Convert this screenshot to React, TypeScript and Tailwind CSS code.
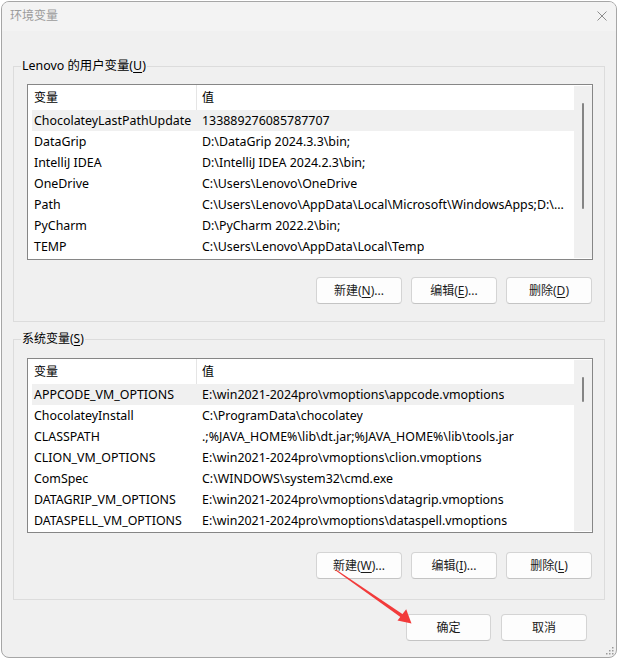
import React from "react";

type Row = [string, string];

const userRows: Row[] = [
  ["ChocolateyLastPathUpdate", "133889276085787707"],
  ["DataGrip", "D:\\DataGrip 2024.3.3\\bin;"],
  ["IntelliJ IDEA", "D:\\IntelliJ IDEA 2024.2.3\\bin;"],
  ["OneDrive", "C:\\Users\\Lenovo\\OneDrive"],
  ["Path", "C:\\Users\\Lenovo\\AppData\\Local\\Microsoft\\WindowsApps;D:\\..."],
  ["PyCharm", "D:\\PyCharm 2022.2\\bin;"],
  ["TEMP", "C:\\Users\\Lenovo\\AppData\\Local\\Temp"],
];

const sysRows: Row[] = [
  ["APPCODE_VM_OPTIONS", "E:\\win2021-2024pro\\vmoptions\\appcode.vmoptions"],
  ["ChocolateyInstall", "C:\\ProgramData\\chocolatey"],
  ["CLASSPATH", ".;%JAVA_HOME%\\lib\\dt.jar;%JAVA_HOME%\\lib\\tools.jar"],
  ["CLION_VM_OPTIONS", "E:\\win2021-2024pro\\vmoptions\\clion.vmoptions"],
  ["ComSpec", "C:\\WINDOWS\\system32\\cmd.exe"],
  ["DATAGRIP_VM_OPTIONS", "E:\\win2021-2024pro\\vmoptions\\datagrip.vmoptions"],
  ["DATASPELL_VM_OPTIONS", "E:\\win2021-2024pro\\vmoptions\\dataspell.vmoptions"],
];

function U({ children }: { children: React.ReactNode }) {
  return <span className="underline underline-offset-[2px]">{children}</span>;
}

function Btn({ children, w = "w-[86px]" }: { children: React.ReactNode; w?: string }) {
  return (
    <div
      className={`${w} h-[27px] shrink-0 flex items-center justify-center rounded-[4px] border border-[#d4d4d4] border-b-[#c4c4c4] bg-[#fdfdfd] text-[12px] text-[#1b1b1b]`}
    >
      {children}
    </div>
  );
}

function ListView({
  rows,
  h,
  thumbH,
}: {
  rows: Row[];
  h: string;
  thumbH: string;
}) {
  return (
    <div className={`flex border border-[#868686] bg-white ${h}`}>
      <div className="flex-1 min-w-0 flex flex-col pl-[4px] overflow-hidden">
        <div className="flex h-[25px] shrink-0 items-stretch">
          <div className="w-[164px] shrink-0 pl-[2px] flex items-center">变量</div>
          <div className="w-[1px] shrink-0 bg-[#e5e5e5]" />
          <div className="pl-[5px] flex items-center">值</div>
        </div>
        {rows.map(([k, v], i) => (
          <div
            key={k}
            className={`flex h-[21px] shrink-0 items-center pt-[1px] text-[12.4px] ${i === 0 ? "bg-[#f0f0f0]" : ""}`}
          >
            <div className="w-[170px] shrink-0 pl-[2px] whitespace-nowrap overflow-hidden">{k}</div>
            <div className="min-w-0 whitespace-nowrap overflow-hidden">{v}</div>
          </div>
        ))}
      </div>
      <div className="w-[18px] shrink-0 my-[1px] bg-[#f0f0f0] pt-[17px] pl-[8px]">
        <div className={`w-[2px] ${thumbH} rounded-full bg-[#858585]`} />
      </div>
    </div>
  );
}

export default function App() {
  return (
    <div className="relative w-[618px] h-[659px] bg-white p-[1px] font-['Noto_Sans','Noto_Sans_CJK_SC',sans-serif] text-[12px] text-black">
      <div className="relative w-[616px] h-[657px] border border-[#a6a6a6] rounded-[8px] overflow-hidden flex flex-col bg-[#f0f0f0]">
        {/* title bar */}
        <div className="h-[29px] shrink-0 bg-[#f3f3f3] flex items-center justify-between pl-[8px] pr-[9px] pb-[2px]">
          <span className="text-[12px] text-[#9b9b9b]">环境变量</span>
          <svg width="10" height="10" viewBox="0 0 10 10" className="block">
            <path d="M0.5 0.5 L9.5 9.5 M9.5 0.5 L0.5 9.5" stroke="#8c8c8c" strokeWidth="1" fill="none" />
          </svg>
        </div>

        {/* body */}
        <div className="flex-1 flex flex-col px-[11px] pt-[27px]">
          <fieldset className="border border-[#dcdcdc] flex flex-col">
            <legend className="ml-[7px] px-[1px] leading-[16px] text-[12.4px]">
              Lenovo 的用户变量(<U>U</U>)
            </legend>
            <div className="mt-[10px] ml-[13px] mr-[11px]">
              <ListView rows={userRows} h="h-[176px]" thumbH="h-[106px]" />
            </div>
            <div className="mt-[17px] mb-[17px] mr-[12px] flex justify-end gap-[9px]">
              <Btn>
                新建(<U>N</U>)...
              </Btn>
              <Btn>
                编辑(<U>E</U>)...
              </Btn>
              <Btn>
                删除(<U>D</U>)
              </Btn>
            </div>
          </fieldset>

          <fieldset className="mt-[9px] border border-[#dcdcdc] flex flex-col">
            <legend className="ml-[7px] px-[1px] leading-[16px]">
              系统变量(<U>S</U>)
            </legend>
            <div className="mt-[11px] ml-[13px] mr-[11px]">
              <ListView rows={sysRows} h="h-[175px]" thumbH="h-[25px]" />
            </div>
            <div className="mt-[19px] mb-[20px] mr-[12px] flex justify-end gap-[9px]">
              <Btn>
                新建(<U>W</U>)...
              </Btn>
              <Btn>
                编辑(<U>I</U>)...
              </Btn>
              <Btn>
                删除(<U>L</U>)
              </Btn>
            </div>
          </fieldset>

          <div className="mt-[14px] pr-[18px] flex justify-end gap-[10px]">
            <Btn w="w-[85px]">确定</Btn>
            <Btn w="w-[86px]">取消</Btn>
          </div>
        </div>

        {/* resize grip */}
        <svg
          width="8"
          height="8"
          viewBox="0 0 8 8"
          className="absolute right-[2px] bottom-[2px]"
        >
          <rect x="6" y="0" width="1.5" height="1.5" fill="#9a9a9a" />
          <rect x="3" y="3" width="1.5" height="1.5" fill="#9a9a9a" />
          <rect x="6" y="3" width="1.5" height="1.5" fill="#9a9a9a" />
          <rect x="0" y="6" width="1.5" height="1.5" fill="#9a9a9a" />
          <rect x="3" y="6" width="1.5" height="1.5" fill="#9a9a9a" />
          <rect x="6" y="6" width="1.5" height="1.5" fill="#9a9a9a" />
        </svg>
      </div>

      {/* red annotation arrow */}
      <svg
        width="618"
        height="659"
        viewBox="0 0 618 659"
        className="absolute left-0 top-0 pointer-events-none"
      >
        <polygon points="336,569.6 335.6,570.4 401.1,617.6 403.1,614.4" fill="#f23b3b" />
        <polygon points="411.5,623.5 397.5,620.5 406.2,609.2" fill="#f23b3b" />
      </svg>
    </div>
  );
}
